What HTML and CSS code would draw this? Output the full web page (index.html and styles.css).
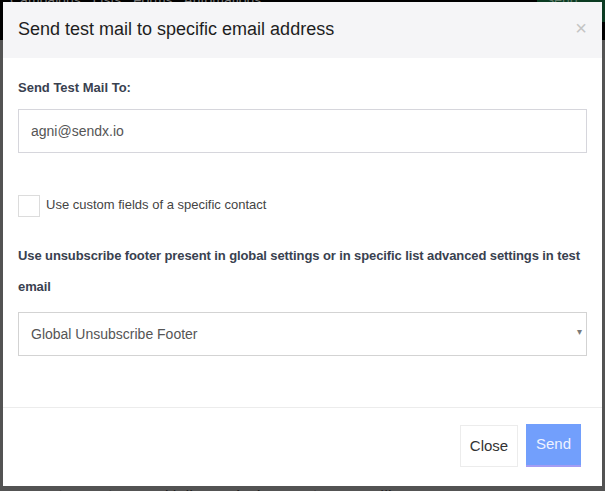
FILE: index.html
```html
<!DOCTYPE html>
<html>
<head>
<meta charset="utf-8">
<link rel="stylesheet" href="styles.css">
</head>
<body>
<div class="page">
  <div class="topnav">
    <span class="nav-text">Campaigns &nbsp; Lists &nbsp; Forms &nbsp; Automations</span>
    <span class="nav-btn">Send</span>
  </div>
  <div class="page-gap"></div>
  <p class="page-text">o m, egestas eget quam. Nullam quis risus eget urna mollis ornare</p>
</div>
<div class="modal">
  <div class="modal-header">
    <h4 class="modal-title">Send test mail to specific email address</h4>
    <span class="close-x">&times;</span>
  </div>
  <div class="modal-body">
    <div class="label">Send Test Mail To:</div>
    <div class="field">agni@sendx.io</div>
    <div class="check-row">
      <span class="checkbox"></span>
      <span class="check-label">Use custom fields of a specific contact</span>
    </div>
    <div class="label long">Use unsubscribe footer present in global settings or in specific list advanced settings in test email</div>
    <div class="field select">
      <span>Global Unsubscribe Footer</span>
      <span class="caret">&#9662;</span>
    </div>
  </div>
  <div class="modal-footer">
    <button class="btn btn-close">Close</button>
    <button class="btn btn-send">Send</button>
  </div>
</div>
</body>
</html>
```
FILE: styles.css
```css
html, body {
  margin: 0;
  padding: 0;
}
body {
  width: 605px;
  height: 491px;
  overflow: hidden;
  background: #535353;
  font-family: "Liberation Sans", Arial, sans-serif;
  position: relative;
}
.page {
  display: flex;
  flex-direction: column;
  height: 491px;
}
.topnav {
  height: 40px;
  background: #000;
  display: flex;
  justify-content: space-between;
  align-items: flex-start;
  color: #777;
  font-size: 14px;
}
.nav-text {
  margin-top: -8px;
  padding-left: 10px;
}
.nav-btn {
  background: #0b3b22;
  width: 60px;
  height: 30px;
  color: #5d7a67;
  margin-top: -8px;
  padding-left: 8px;
}
.page-gap {
  flex: 1;
}
.page-text {
  margin: 0 0 -14px 0;
  height: 20px;
  font-family: Lato, sans-serif;
  font-size: 16px;
  color: #202020;
  padding-left: 0;
  text-indent: -8px;
}
.modal {
  position: absolute;
  left: 3px;
  top: 2px;
  width: 599px;
  height: 484px;
  background: #fff;
  display: flex;
  flex-direction: column;
}
.modal-header {
  height: 56px;
  background: #f5f5f7;
  display: flex;
  align-items: center;
  justify-content: space-between;
  padding: 0 15px 0 15px;
}
.modal-title {
  margin: 0;
  font-weight: normal;
  font-size: 18px;
  color: #1e1e1e;
  padding-bottom: 1px;
}
.close-x {
  font-size: 20px;
  color: #c4c4c4;
  line-height: 20px;
  margin-top: -4px;
  margin-right: 0;
}
.modal-body {
  flex: 1;
  padding: 20px 15px 0 15px;
  border-bottom: 1px solid #ececec;
}
.label {
  font-size: 13px;
  font-weight: bold;
  color: #39414f;
  line-height: 20px;
  margin-bottom: 11px;
}
.label.long {
  line-height: 31px;
  margin-bottom: 10px;
  letter-spacing: -0.1px;
}
.field {
  height: 42px;
  border: 1px solid #d6d6dc;
  display: flex;
  align-items: center;
  padding: 0 12px;
  font-size: 14px;
  color: #555;
}
.check-row {
  display: flex;
  align-items: center;
  margin-top: 42px;
  margin-bottom: 23px;
}
.checkbox {
  width: 20px;
  height: 20px;
  border: 1px solid #dcdcdc;
  background: #fff;
  display: inline-block;
}
.check-label {
  font-size: 13px;
  color: #444;
  margin-left: 6px;
  margin-top: -3px;
}
.select {
  justify-content: space-between;
  padding-right: 4px;
  border-color: #d3d3d3;
}
.caret {
  font-size: 10px;
  color: #7a7a7a;
  margin-top: -6px;
}
.modal-footer {
  height: 78px;
  display: flex;
  justify-content: flex-end;
  align-items: flex-start;
  padding: 16px 21px 0 0;
  box-sizing: border-box;
  gap: 8px;
}
.btn {
  font-family: "Liberation Sans", Arial, sans-serif;
  font-size: 15px;
  height: 42px;
  margin: 0;
  cursor: pointer;
}
.btn-close {
  width: 58px;
  background: #fff;
  border: 1px solid #ececec;
  color: #333;
  margin-top: 1px;
  padding-bottom: 2px;
}
.btn-send {
  width: 55px;
  height: 43px;
  background: #729ffc;
  border: none;
  border-bottom: 2px solid #a49cf3;
  color: #eef2ff;
  padding-bottom: 3px;
}
```
